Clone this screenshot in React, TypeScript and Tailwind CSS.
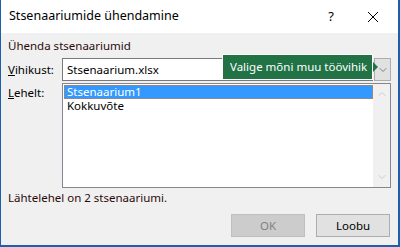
import { ChevronDown, ChevronUp } from "lucide-react";

function App() {
  return (
    <div
      className="flex h-[247px] w-[400px] flex-col border-b-2 border-l border-r-2 border-[#1c5fae] bg-[#f0f0f0] text-[11.5px] text-[#000]"
      style={{ fontFamily: '"Noto Sans", "Liberation Sans", sans-serif' }}
    >
      <div className="flex h-[33px] items-center bg-white pl-[8px] pr-[19px] text-[12.5px]">
        <span className="flex-1">Stsenaariumide ühendamine</span>
        <span className="mr-[33px] text-[13px]">?</span>
        <svg width="12" height="12" viewBox="0 0 12 12" className="stroke-black">
          <path d="M1 1 L11 11 M11 1 L1 11" strokeWidth="1" />
        </svg>
      </div>

      <div className="relative flex flex-1 flex-col px-[7px] pt-[4px]">
        <div className="h-[18px] leading-[18px] text-[#2b0a0a]">Ühenda stsenaariumid</div>

        <div className="mt-[3px] flex h-[23px] items-center">
          <span className="w-[54px]">
            <u>V</u>ihikust:
          </span>
          <div className="flex h-[23px] flex-1 items-center border border-[#7a7a7a] bg-white pl-[4px]">Stsenaarium.xlsx</div>
          <div className="ml-[1px] flex h-[23px] w-[17px] items-center justify-center border border-[#adadad] bg-[#e1e1e1]">
            <ChevronDown size={12} strokeWidth={1.5} className="text-[#606060]" />
          </div>
        </div>

        <div className="mt-[2px] flex">
          <span className="w-[54px] pt-[1px]">
            <u>L</u>ehelt:
          </span>
          <div className="flex h-[105px] flex-1 border border-[#828790] bg-white">
            <div className="flex-1 pl-[1px] pt-[1px]">
              <div className="flex h-[14px] items-center border border-dotted border-[#e07b20] bg-[#3399ff] pl-[2px] leading-[12px] text-white">
                Stsenaarium1
              </div>
              <div className="h-[14px] pl-[3px] leading-[14px]">Kokkuvõte</div>
            </div>
            <div className="flex w-[17px] flex-col items-center justify-between bg-[#f0f0f0] py-[4px]">
              <ChevronUp size={12} strokeWidth={1.5} className="text-[#bfbfbf]" />
              <ChevronDown size={12} strokeWidth={1.5} className="text-[#bfbfbf]" />
            </div>
          </div>
        </div>

        <div className="mt-[1px] text-[#2b0a0a]">Lähtelehel on 2 stsenaariumi.</div>

        <div className="mt-auto mb-[8px] flex justify-end gap-[11px] pr-[1px]">
          <div className="flex h-[23px] w-[74px] items-center justify-center border border-[#bfbfbf] bg-[#cccccc] text-[#838383]">OK</div>
          <div className="flex h-[23px] w-[74px] items-center justify-center border border-[#adadad] bg-[#e1e1e1]">Loobu</div>
        </div>

        <div className="absolute left-[221px] top-[21px] flex items-center">
          <div className="flex h-[26px] w-[151px] items-center border border-white bg-[#217346] pl-[7px] text-[11.5px] text-white">
            Valige mõni muu töövihik
          </div>
          <div className="h-0 w-0 border-y-[5px] border-l-[5px] border-y-transparent border-l-[#217346]" />
        </div>
      </div>
    </div>
  );
}

export default App;
